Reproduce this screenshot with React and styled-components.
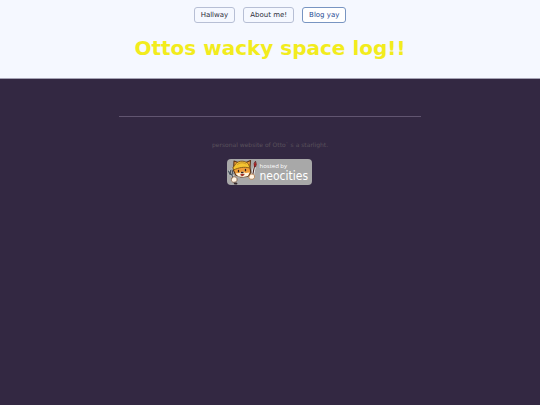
import React from "react";
import styled, { createGlobalStyle } from "styled-components";

const GlobalStyle = createGlobalStyle`
  *, *::before, *::after { box-sizing: border-box; }
  html { background: #332842; }
  body {
    margin: 0;
    color: #5a525c;
    background: #332842;
    font-family: "DejaVu Sans", Verdana, sans-serif;
  }
`;

const Header = styled.header`
  display: flex;
  flex-direction: column;
  align-items: center;
  gap: 12px;
  padding: 7px 8px 17px;
  background: #f5f8ff;
  border-bottom: 1px solid #a5a3b5;
  text-align: center;
`;

const Nav = styled.nav`
  display: flex;
  flex-wrap: wrap;
  justify-content: center;
  gap: 8px;
`;

const NavLink = styled.a`
  padding: 0 6px;
  border: 1px solid ${(p) => (p.$current ? "#7895c2" : "#b7bfd5")};
  border-radius: 3px;
  background: ${(p) => (p.$current ? "#ffffff" : "transparent")};
  color: ${(p) => (p.$current ? "#1e4a94" : "#2c2c38")};
  font-size: 7px;
  line-height: 14px;
  text-decoration: none;
`;

const Title = styled.h1`
  margin: 0;
  color: #f2ec1d;
  font-size: 20px;
  line-height: 26px;
  font-weight: 700;
`;

const Footer = styled.footer`
  display: flex;
  flex-direction: column;
  align-items: center;
  width: 56%;
  margin: 37px auto 0;
  padding-top: 23px;
  border-top: 1px solid #615570;
`;

const Credit = styled.p`
  margin: 0 0 9px;
  font-size: 6px;
  line-height: 10px;
`;

const Badge = styled.a`
  display: flex;
  width: 85px;
  height: 26px;
  border-radius: 4px;
  background: #a8a8a8;
  color: #ffffff;
  text-decoration: none;
`;

const Mascot = styled.svg`
  flex: none;
  width: 32px;
  height: 26px;
`;

const BadgeText = styled.span`
  display: flex;
  flex-direction: column;
  padding-top: 4px;
  white-space: nowrap;
`;

const Hosted = styled.span`
  font-family: "Open Sans", "Noto Sans", sans-serif;
  font-size: 6px;
  line-height: 6px;
`;

const Brand = styled.span`
  font-family: "DejaVu Sans Condensed", sans-serif;
  font-size: 12px;
  line-height: 14px;
`;

const links = [
  { label: "Hallway", href: "#hallway" },
  { label: "About me!", href: "#about" },
  { label: "Blog yay", href: "#blog", current: true },
];

function NeocitiesCat() {
  return (
    <Mascot viewBox="0 0 32 26" aria-hidden="true">
      <g strokeLinecap="round" strokeLinejoin="round">
        <path d="M2 12l1.500 3M5 10.500l1 4M2.500 15l3.500 1M4.500 15l3 6" fill="none" stroke="#d5d5d5" strokeWidth="2" />
        <path d="M1.500 12l1.500 3.500 3-.700-1-4M3.500 11.500v3M4.500 15.500l3 5" fill="none" stroke="#46525d" strokeWidth="1.200" />
        <path d="M28 5l-2.500 12" stroke="#fff" strokeWidth="2.600" />
        <path d="M27.500 7L25.500 17" stroke="#4b2b25" strokeWidth="1.200" />
        <path d="M28.300 2.500l-1.300 2v3l1.500.500.800-2.500z" fill="#b42425" stroke="#56191b" strokeWidth=".7" />
        <path d="M6.500 11.500L7 2l4 1.500h8l4.500-2-.500 7 .800 5-3 4-7 .500-5-2z" fill="#ef9c39" stroke="#5c3518" strokeWidth="1.100" />
        <path d="M7.500 6.500c2-5 10-6 14-1.500l1.500 4C17 7.500 12 8.500 6.500 11L6 9z" fill="#f4c431" stroke="#805616" strokeWidth=".9" />
        <path d="M10.500 5.500c2-2 6-2.500 8.500-.500" fill="none" stroke="#b27d22" strokeWidth=".7" />
        <path d="M8.500 14.500l4-.500 3-1.500 3 1.500 4-.500-1.500 3.500-5 1-4.500-.500z" fill="#fff4dd" />
        <path d="M11.500 11.500v1.200M18.500 10.500v1.200M14.500 13.500h1.500" fill="none" stroke="#332420" strokeWidth="1.300" />
        <path d="M13.500 15h4l-1.500 2h-1.500z" fill="#b23225" stroke="#6c3124" strokeWidth=".3" />
        <path d="M5 19c1-2 4.500-1.500 5 .800s-1 3.500-3.200 3.500-3.300-2.300-1.800-4.300z" fill="#fff4e4" stroke="#805b3e" strokeWidth=".8" />
        <path d="M6.500 23.800l3-.300 1 1-.500 1H7.500z" fill="#34272a" />
        <path d="M22.500 16.500c1-2.200 4.500-1.800 5 .500s-1.500 3.700-3.700 3.200-2.300-1.800-1.300-3.700z" fill="#fff4e4" stroke="#b87a43" strokeWidth=".8" />
      </g>
    </Mascot>
  );
}

export default function App() {
  return (
    <>
      <GlobalStyle />
      <Header>
        <Nav aria-label="Main">
          {links.map((link) => (
            <NavLink
              key={link.label}
              href={link.href}
              $current={link.current}
              aria-current={link.current ? "page" : undefined}
            >
              {link.label}
            </NavLink>
          ))}
        </Nav>
        <Title>Ottos wacky space log!!</Title>
      </Header>
      <Footer>
        <Credit>personal website of Otto` s a starlight.</Credit>
        <Badge href="#neocities">
          <NeocitiesCat />
          <BadgeText>
            <Hosted>hosted by</Hosted>
            <Brand>neocities</Brand>
          </BadgeText>
        </Badge>
      </Footer>
    </>
  );
}
